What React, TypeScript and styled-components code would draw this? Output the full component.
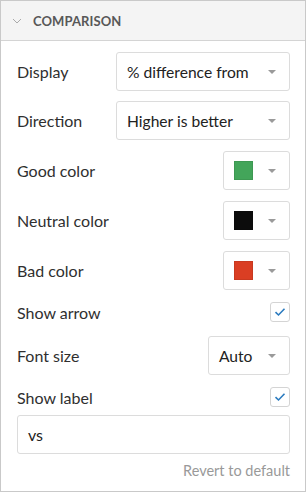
import styled, { createGlobalStyle } from "styled-components";

const GlobalStyle = createGlobalStyle`
	html, body {
		margin: 0;
		padding: 0;
		background: #fff;
	}
	body {
		font-family: Lato, "Liberation Sans", sans-serif;
		color: #333;
	}
`

const Panel = styled.section`
	box-sizing: border-box;
	width: 306px;
	height: 492px;
	border: 1px solid #c9c9c9;
	background: #fff;
`

const Header = styled.header`
	display: flex;
	align-items: center;
	gap: 11px;
	height: 39px;
	padding-left: 11px;
	background: #f4f4f4;
	border-bottom: 1px solid #d4d4d4;
`

const HeaderTitle = styled.span`
	font-size: 13px;
	font-weight: 700;
	letter-spacing: 0.1px;
	color: #585858;
`

const Body = styled.div`
	padding: 11px 15px 0 15px;
`

const Row = styled.div<{ $top: number; $height?: number }>`
	display: flex;
	align-items: center;
	justify-content: space-between;
	margin-top: ${p => p.$top}px;
	height: ${p => p.$height ?? 39}px;
`

const Label = styled.span`
	font-size: 16px;
	color: #2f2f2f;
	padding-left: 1px;
`

const Select = styled.div<{ $width: number }>`
	box-sizing: border-box;
	display: flex;
	align-items: center;
	justify-content: space-between;
	width: ${p => p.$width}px;
	height: 39px;
	padding: 0 13px 0 10px;
	border: 1px solid #dcdcdc;
	border-radius: 3px;
	font-size: 15.6px;
	color: #222;
	background: #fff;
`

const Swatch = styled.span<{ $color: string }>`
	width: 19px;
	height: 19px;
	background: ${p => p.$color};
	border: 1px solid rgba(0, 0, 0, 0.08);
	box-sizing: border-box;
`

const Caret = styled.span`
	width: 0;
	height: 0;
	border-left: 4.5px solid transparent;
	border-right: 4.5px solid transparent;
	border-top: 4.5px solid #9a9a9a;
`

const CheckBox = styled.span`
	box-sizing: border-box;
	display: flex;
	align-items: center;
	justify-content: center;
	width: 20px;
	height: 20px;
	border: 1px solid #d4d4d4;
	border-radius: 3px;
	background: #fff;
`

const TextInput = styled.div`
	box-sizing: border-box;
	display: flex;
	align-items: center;
	margin-top: 8px;
	height: 39px;
	padding: 0 10px;
	border: 1px solid #dcdcdc;
	border-radius: 3px;
	font-size: 16px;
	color: #222;
	margin-left: 1px;
`

const Revert = styled.div`
	margin-top: 8px;
	text-align: right;
	font-size: 14.5px;
	line-height: 18px;
	color: #999;
`

function Chevron() {
	return <svg width="10" height="6" viewBox="0 0 10 6">
		<path d="M1 1 L5 5 L9 1" fill="none" stroke="#aaa" strokeWidth="1" />
	</svg>
}

function Check() {
	return <svg width="12" height="10" viewBox="0 0 12 10">
		<path d="M1.5 5.2 L4.5 8 L10.5 1.8" fill="none" stroke="#2b7bbf" strokeWidth="1.6" />
	</svg>
}

const colors = [
	{ label: "Good color", color: "#43a55a" },
	{ label: "Neutral color", color: "#0c0c0c" },
	{ label: "Bad color", color: "#da3e23" },
]

export default function App() {
	return <>
		<GlobalStyle />
		<Panel>
			<Header>
				<Chevron />
				<HeaderTitle>COMPARISON</HeaderTitle>
			</Header>
			<Body>
				<Row $top={0}>
					<Label>Display</Label>
					<Select $width={174}>% difference from<Caret /></Select>
				</Row>
				<Row $top={10}>
					<Label>Direction</Label>
					<Select $width={174}>Higher is better<Caret /></Select>
				</Row>
				{colors.map(c =>
					<Row key={c.label} $top={11}>
						<Label>{c.label}</Label>
						<Select $width={67}><Swatch $color={c.color} /><Caret /></Select>
					</Row>
				)}
				<Row $top={12} $height={20}>
					<Label>Show arrow</Label>
					<CheckBox><Check /></CheckBox>
				</Row>
				<Row $top={14}>
					<Label>Font size</Label>
					<Select $width={82}>Auto<Caret /></Select>
				</Row>
				<Row $top={12} $height={20}>
					<Label>Show label</Label>
					<CheckBox><Check /></CheckBox>
				</Row>
				<TextInput>vs</TextInput>
				<Revert>Revert to default</Revert>
			</Body>
		</Panel>
	</>
}
